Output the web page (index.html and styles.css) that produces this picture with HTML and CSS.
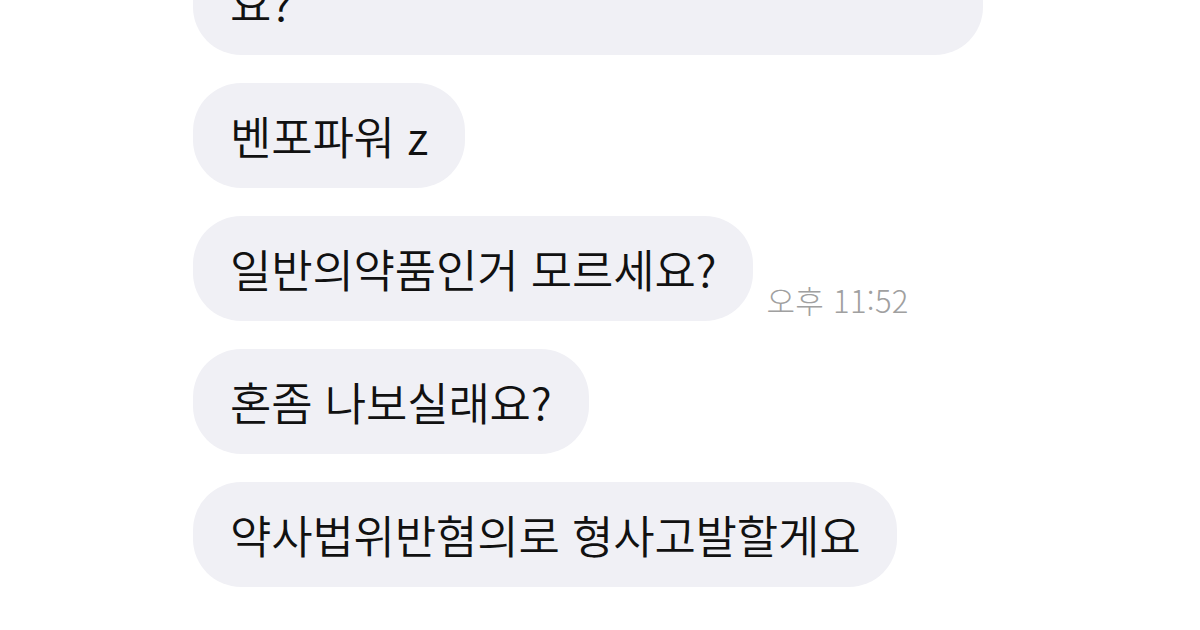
FILE: index.html
```html
<!DOCTYPE html>
<html lang="ko">
<head>
<meta charset="utf-8">
<link rel="stylesheet" href="styles.css">
</head>
<body>
<div class="chat">
  <div class="row"><div class="bubble bubble-wide">요?</div></div>
  <div class="row"><div class="bubble">벤포파워 z</div></div>
  <div class="row"><div class="bubble">일반의약품인거 모르세요?</div><span class="time">오후 11:52</span></div>
  <div class="row"><div class="bubble">혼좀 나보실래요?</div></div>
  <div class="row"><div class="bubble">약사법위반혐의로 형사고발할게요</div></div>
</div>
</body>
</html>
```
FILE: styles.css
```css
html, body {
  margin: 0;
  padding: 0;
  background: #ffffff;
}
body {
  width: 1200px;
  height: 630px;
  overflow: hidden;
  font-family: "Noto Sans CJK KR", "Noto Sans", sans-serif;
}
.chat {
  display: flex;
  flex-direction: column;
  gap: 28px;
  padding-left: 193px;
  margin-top: -50px;
}
.row {
  display: flex;
  align-items: flex-end;
  gap: 13px;
}
.bubble {
  background: #f0f0f5;
  color: #111111;
  font-size: 45px;
  font-weight: 350;
  line-height: 53px;
  height: 53px;
  padding: 26px 37px;
  border-radius: 48px;
  white-space: nowrap;
  letter-spacing: -0.2px;
}
.bubble-wide {
  width: 716px;
}
.time {
  color: #a0a0a0;
  font-size: 31px;
  font-weight: 300;
  line-height: 34px;
  padding-bottom: 4px;
  letter-spacing: 0.3px;
}
```
